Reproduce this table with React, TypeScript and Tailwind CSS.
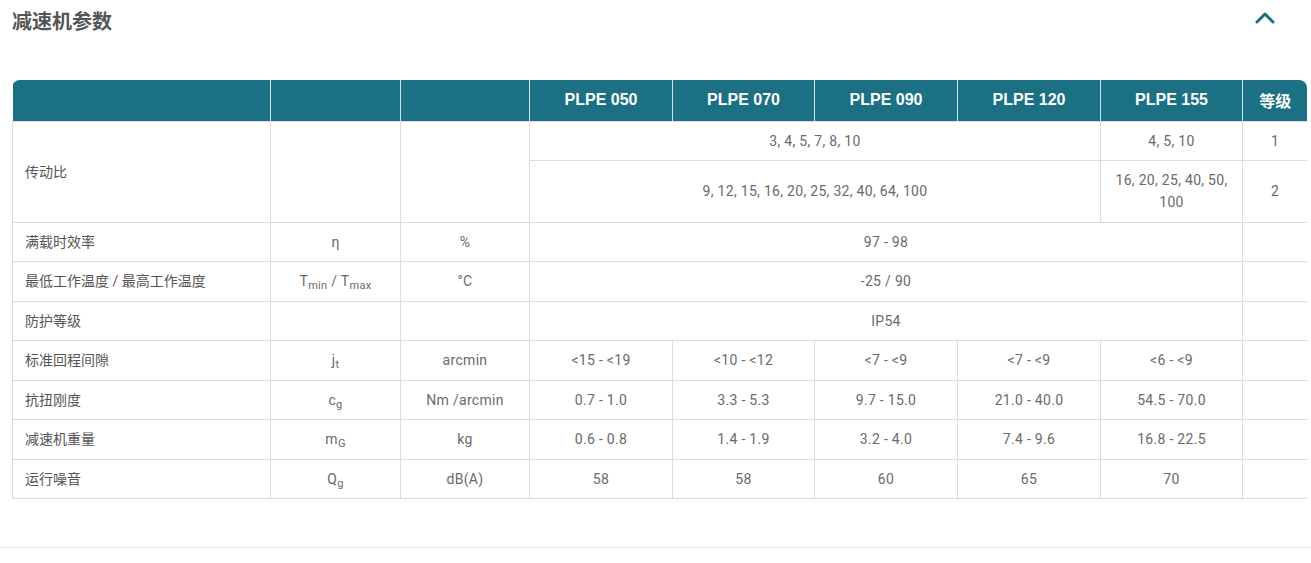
import React from "react";

const td = "border border-[#dddddd] px-[10px] py-[8.25px] leading-[22px] text-center text-[14px] tracking-[0.3px] text-[#6a6a6a]";
const label = "border border-[#dddddd] pl-[12px] pr-[10px] py-[8.25px] leading-[22px] text-left text-[14px] text-[#555555]";
const th = "border-l border-[#cfe3e8] first:border-l-0 px-[10px] h-[41px] text-center text-[16px] font-bold text-white";

const models = ["PLPE 050", "PLPE 070", "PLPE 090", "PLPE 120", "PLPE 155"];

const perModel: { name: string; sym: React.ReactNode; unit: string; values: string[] }[] = [
  {
    name: "标准回程间隙",
    sym: (
      <>
        j<sub className="text-[11px]">t</sub>
      </>
    ),
    unit: "arcmin",
    values: ["<15 - <19", "<10 - <12", "<7 - <9", "<7 - <9", "<6 - <9"],
  },
  {
    name: "抗扭刚度",
    sym: (
      <>
        c<sub className="text-[11px]">g</sub>
      </>
    ),
    unit: "Nm /arcmin",
    values: ["0.7 - 1.0", "3.3 - 5.3", "9.7 - 15.0", "21.0 - 40.0", "54.5 - 70.0"],
  },
  {
    name: "减速机重量",
    sym: (
      <>
        m<sub className="text-[11px]">G</sub>
      </>
    ),
    unit: "kg",
    values: ["0.6 - 0.8", "1.4 - 1.9", "3.2 - 4.0", "7.4 - 9.6", "16.8 - 22.5"],
  },
  {
    name: "运行噪音",
    sym: (
      <>
        Q<sub className="text-[11px]">g</sub>
      </>
    ),
    unit: "dB(A)",
    values: ["58", "58", "60", "65", "70"],
  },
];

export default function App() {
  return (
    <div
      className="w-[1311px] h-[563px] bg-white"
      style={{ fontFamily: "Roboto, 'Noto Sans CJK SC', sans-serif" }}
    >
      {/* Title bar */}
      <div className="flex items-center justify-between pl-[12px] pr-[36px] h-[42px]">
        <h2
          className="text-[20px] font-bold text-[#555555]"
          style={{ fontFamily: "'Noto Sans CJK SC', sans-serif" }}
        >
          减速机参数
        </h2>
        <svg className="w-[20px] h-[14px] mt-[-6px]" viewBox="0 0 20 14" fill="none">
          <path d="M2 11 L10 3 L18 11" stroke="#1b6f80" strokeWidth={3} strokeLinecap="round" strokeLinejoin="round" />
        </svg>
      </div>

      {/* Table */}
      <div className="mt-[38px] ml-[12px] w-[1295px] rounded-t-[8px] overflow-hidden">
        <table className="w-full table-fixed border-collapse">
          <colgroup>
            <col className="w-[258px]" />
            <col className="w-[130px]" />
            <col className="w-[129px]" />
            <col className="w-[143px]" />
            <col className="w-[142px]" />
            <col className="w-[143px]" />
            <col className="w-[143px]" />
            <col className="w-[142px]" />
            <col className="w-[65px]" />
          </colgroup>
          <thead>
            <tr className="bg-[#1b7083]" style={{ fontFamily: "'Liberation Sans', 'Noto Sans CJK SC', sans-serif" }}>
              <th className={th}></th>
              <th className={th}></th>
              <th className={th}></th>
              {models.map((m) => (
                <th key={m} className={th}>
                  {m}
                </th>
              ))}
              <th className={th} style={{ fontFamily: "'Noto Sans CJK SC', sans-serif" }}>
                等级
              </th>
            </tr>
          </thead>
          <tbody>
            <tr>
              <td rowSpan={2} className={label}>
                传动比
              </td>
              <td rowSpan={2} className={td}></td>
              <td rowSpan={2} className={td}></td>
              <td colSpan={4} className={td}>
                3, 4, 5, 7, 8, 10
              </td>
              <td className={td}>4, 5, 10</td>
              <td className={td}>1</td>
            </tr>
            <tr>
              <td colSpan={4} className={td}>
                9, 12, 15, 16, 20, 25, 32, 40, 64, 100
              </td>
              <td className={td}>
                16, 20, 25, 40, 50,
                <br />
                100
              </td>
              <td className={td}>2</td>
            </tr>
            <tr>
              <td className={label}>满载时效率</td>
              <td className={td}>η</td>
              <td className={td}>%</td>
              <td colSpan={5} className={td}>
                97 - 98
              </td>
              <td className={td}></td>
            </tr>
            <tr>
              <td className={label}>最低工作温度 / 最高工作温度</td>
              <td className={td}>
                T<sub className="text-[11px]">min</sub> / T<sub className="text-[11px]">max</sub>
              </td>
              <td className={td}>°C</td>
              <td colSpan={5} className={td}>
                -25 / 90
              </td>
              <td className={td}></td>
            </tr>
            <tr>
              <td className={label}>防护等级</td>
              <td className={td}></td>
              <td className={td}></td>
              <td colSpan={5} className={td}>
                IP54
              </td>
              <td className={td}></td>
            </tr>
            {perModel.map((r) => (
              <tr key={r.name}>
                <td className={label}>{r.name}</td>
                <td className={td}>{r.sym}</td>
                <td className={td}>{r.unit}</td>
                {r.values.map((v, i) => (
                  <td key={i} className={td}>
                    {v}
                  </td>
                ))}
                <td className={td}></td>
              </tr>
            ))}
          </tbody>
        </table>
      </div>

      {/* Bottom divider */}
      <div className="mt-[48px] border-t border-[#e5e5e5]" />
    </div>
  );
}
